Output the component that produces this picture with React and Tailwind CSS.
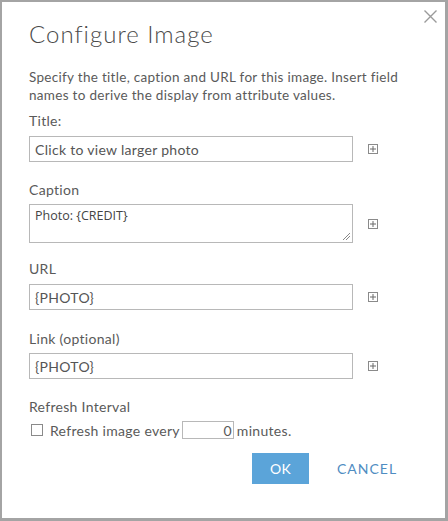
import React from 'react';

const font = { fontFamily: 'Lato, "Open Sans", sans-serif' };

function PlusBox() {
  return (
    <div className="ml-[15px] flex h-[10px] w-[10px] items-center justify-center border border-[#8a8a8a]">
      <svg width="8" height="8" viewBox="0 0 8 8">
        <path d="M4 1v6M1 4h6" stroke="#6a6a6a" strokeWidth="1" />
      </svg>
    </div>
  );
}

function Field({ label, value, mt, gap }) {
  return (
    <>
      <div className={`${mt} h-[18px] leading-[18px] text-[14px] text-[#5a5a5a]`}>{label}</div>
      <div className={`${gap} flex items-center`}>
        <div className="flex h-[26px] w-[324px] items-center border border-[#b8b8b8] px-[5px] text-[14px] text-[#555]">
          {value}
        </div>
        <PlusBox />
      </div>
    </>
  );
}

export default function App() {
  return (
    <div
      className="relative h-[521px] w-[448px] border-l-2 border-t-2 border-r-[3px] border-b-[3px] border-[#a4a4a4] bg-white pl-[27px] tracking-[0.3px]"
      style={font}
    >
      {/* close */}
      <button className="absolute right-[8px] top-[8px] p-0">
        <svg width="13" height="13" viewBox="0 0 13 13">
          <path d="M0.5 0.5l12 12M12.5 0.5l-12 12" stroke="#9a9a9a" strokeWidth="1.4" />
        </svg>
      </button>

      <h1 className="mt-[16px] h-[32px] text-[24px] font-light leading-[32px] tracking-[1px] text-[#4a4a4a]">Configure Image</h1>

      <p className="mt-[18px] w-[400px] text-[13.5px] leading-[18px] text-[#5a5a5a]">
        Specify the title, caption and URL for this image. Insert field names to derive the display from attribute values.
      </p>

      <Field label="Title:" value="Click to view larger photo" mt="mt-[8px]" gap="mt-[6px]" />

      <div className="mt-[19px] h-[18px] text-[14px] leading-[18px] text-[#5a5a5a]">Caption</div>
      <div className="mt-[5px] flex items-center">
        <div className="relative h-[39px] w-[324px] border border-[#b8b8b8] px-[5px] pt-[3px] text-[12.5px] leading-[16px] tracking-normal text-[#444]" style={{ fontFamily: '"Open Sans", sans-serif' }}>
          Photo: {'{CREDIT}'}
          <svg className="absolute bottom-[1px] right-[1px]" width="10" height="10" viewBox="0 0 10 10">
            <path d="M9 2L2 9M9 5L5 9" stroke="#888" strokeWidth="1" />
          </svg>
        </div>
        <PlusBox />
      </div>

      <Field label="URL" value="{PHOTO}" mt="mt-[17px]" gap="mt-[6px]" />
      <Field label="Link (optional)" value="{PHOTO}" mt="mt-[20px]" gap="mt-[5px]" />

      <div className="mt-[19px] h-[18px] text-[14px] leading-[18px] text-[#5a5a5a]">Refresh Interval</div>
      <div className="mt-[5px] flex h-[18px] items-center text-[14px] text-[#5a5a5a]">
        <div className="ml-[2px] h-[12px] w-[12px] border border-[#8a8a8a]" />
        <span className="ml-[7px]">Refresh image every</span>
        <div className="ml-[2px] flex h-[18px] w-[52px] items-center justify-end border border-[#b8b8b8] pr-[1px]">0</div>
        <span className="ml-[3px]">minutes.</span>
      </div>

      <div className="mt-[14px] flex items-center">
        <button className="ml-[223px] h-[31px] w-[57px] bg-[#5ba4d9] text-[14px] text-white">OK</button>
        <button className="ml-[28px] text-[14px] tracking-[1px] text-[#4f8dc2]">CANCEL</button>
      </div>
    </div>
  );
}
